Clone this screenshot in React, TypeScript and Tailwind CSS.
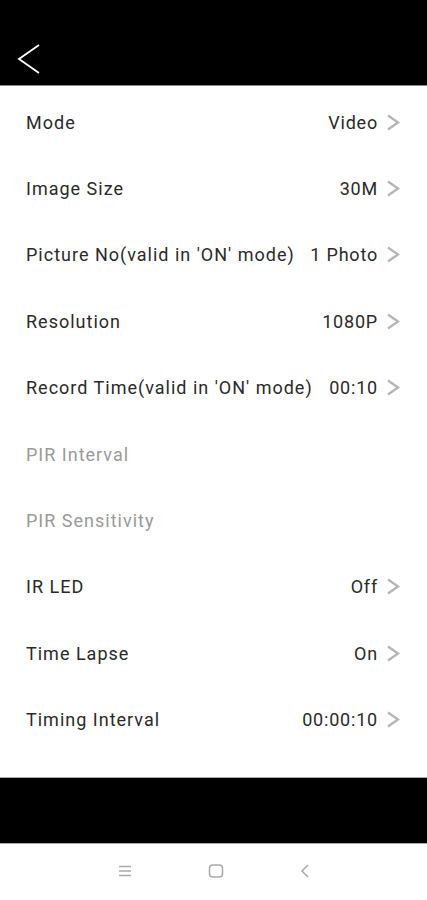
type Row = { label: string; value?: string; disabled?: boolean }

const ROWS: Row[] = [
  { label: 'Mode', value: 'Video' },
  { label: 'Image Size', value: '30M' },
  { label: "Picture No(valid in 'ON' mode)", value: '1 Photo' },
  { label: 'Resolution', value: '1080P' },
  { label: "Record Time(valid in 'ON' mode)", value: '00:10' },
  { label: 'PIR Interval', disabled: true },
  { label: 'PIR Sensitivity', disabled: true },
  { label: 'IR LED', value: 'Off' },
  { label: 'Time Lapse', value: 'On' },
  { label: 'Timing Interval', value: '00:00:10' },
]

function Chevron() {
  return (
    <svg width="14" height="17" viewBox="0 0 14 17" fill="none" className="shrink-0">
      <path d="M2 1.5 L12 8.5 L2 15.5" stroke="#b5b5b5" strokeWidth="2.4" />
    </svg>
  )
}

export default function App() {
  return (
    <div
      className="flex h-[900px] w-[427px] flex-col bg-white"
      style={{ fontFamily: 'Roboto, "Noto Sans", sans-serif' }}
    >
      {/* Header */}
      <div className="flex h-[85px] items-end bg-black pb-[11px] pl-[17px]">
        <svg width="24" height="30" viewBox="0 0 24 30" fill="none">
          <path d="M22 1 L2 15 L22 29" stroke="#fff" strokeWidth="1.8" />
        </svg>
      </div>
      <div className="h-px bg-[#888]" />

      {/* Settings list */}
      <div className="flex flex-col pt-[3px]">
        {ROWS.map((r) => (
          <div key={r.label} className="flex h-[66.4px] items-center justify-between pl-[26px] pr-[27px]">
            <span
              className={`text-[18px] tracking-[1px] ${r.disabled ? 'text-[#9a9a9a]' : 'text-[#2a2a2a]'}`}
            >
              {r.label}
            </span>
            {r.value && (
              <span className="flex items-center gap-[8px] text-[18px] tracking-[0.8px] text-[#2a2a2a]">
                {r.value}
                <Chevron />
              </span>
            )}
          </div>
        ))}
      </div>

      <div className="flex-1" />

      {/* Bottom bar */}
      <div className="h-px bg-[#aaa]" />
      <div className="h-[65px] bg-black" />
      <div className="h-px bg-[#aaa]" />

      {/* System nav */}
      <div className="flex h-[56px] items-center justify-center gap-[76px] pb-[2px]">
        <svg width="14" height="12" viewBox="0 0 14 12" fill="none" stroke="#aaa" strokeWidth="1.3">
          <path d="M1 1.5h12M1 6h12M1 10.5h12" />
        </svg>
        <svg width="16" height="14" viewBox="0 0 16 14" fill="none" stroke="#aaa" strokeWidth="1.5">
          <rect x="1.5" y="1" width="13" height="12" rx="3" />
        </svg>
        <svg width="10" height="14" viewBox="0 0 10 14" fill="none" stroke="#aaa" strokeWidth="1.5">
          <path d="M8 1L2 7l6 6" />
        </svg>
      </div>
    </div>
  )
}
